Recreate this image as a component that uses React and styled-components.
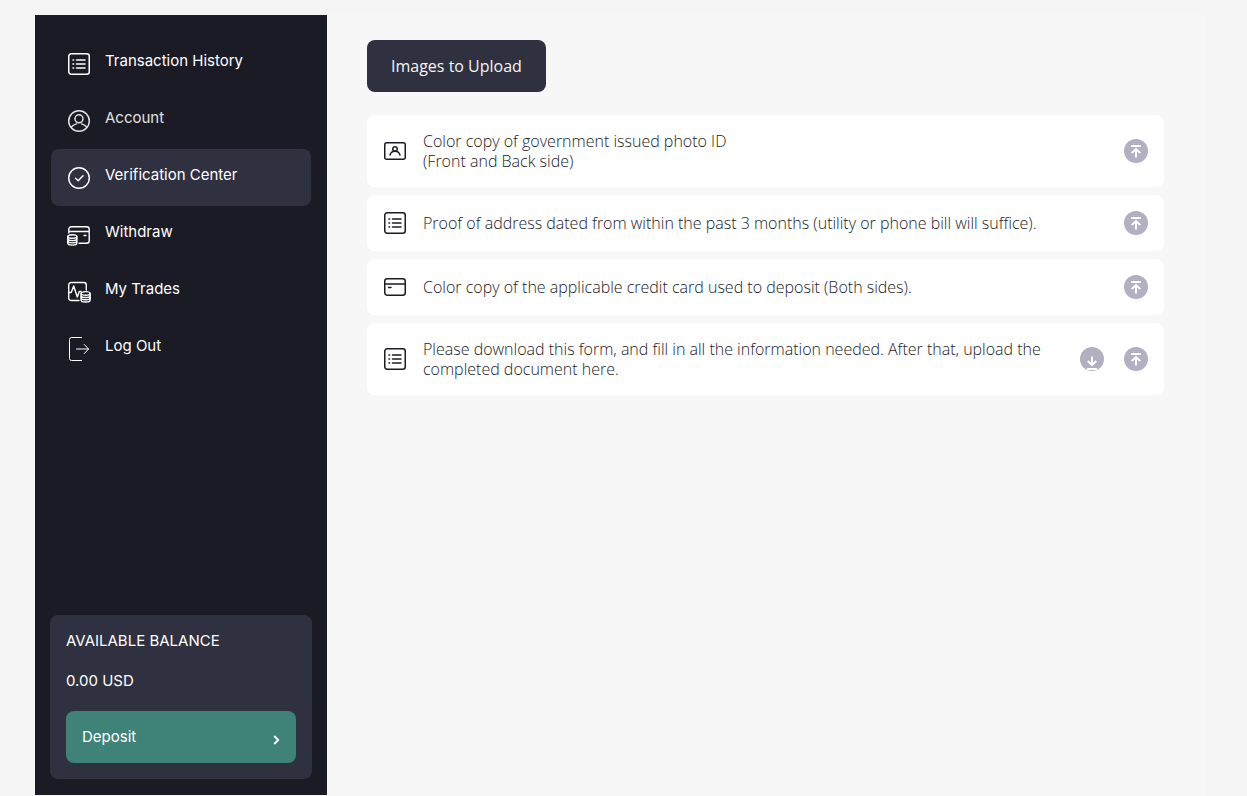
import React from "react";
import styled, { createGlobalStyle } from "styled-components";

const GlobalStyle = createGlobalStyle`
  *, *::before, *::after { box-sizing: border-box; }
  body {
    margin: 0;
    background: #f5f5f5;
    font-family: "Open Sans", sans-serif;
    font-size: 16px;
    line-height: 20px;
    color: #1b1b25;
  }
  button { font: inherit; border: 0; cursor: pointer; }
`;

const Page = styled.div`
  display: flex;
  min-height: 100vh;
  padding: 15px 42px 0 35px;
`;

const Sidebar = styled.aside`
  display: flex;
  flex-direction: column;
  justify-content: space-between;
  flex: 0 0 292px;
  margin-bottom: 1px;
  padding: 20px 15px 16px;
  background: #1b1b25;
  color: #fff;
  font-family: Inter, "Open Sans", sans-serif;
  font-size: 15px;
`;

const Nav = styled.nav`
  display: flex;
  flex-direction: column;
  padding: 0 1px;
`;

const NavLink = styled.a`
  display: flex;
  align-items: flex-start;
  gap: 14px;
  height: 57px;
  padding: 17px 16px;
  border-radius: 8px;
  background: ${(p) => (p.$active ? "#2f3040" : "transparent")};
  color: ${(p) => (p.$dim ? "#e0e0e0" : "#fff")};
  line-height: 18px;
  text-decoration: none;
`;

const Icon = styled.svg`
  flex: none;
  width: 24px;
  height: 24px;
  fill: none;
  stroke: currentColor;
  stroke-width: ${(p) => p.$weight || 1.5};
  stroke-linecap: round;
  stroke-linejoin: round;
`;

const BalanceCard = styled.section`
  display: flex;
  flex-direction: column;
  gap: 20px;
  padding: 16px;
  border-radius: 8px;
  background: #2f3040;
`;

const BalanceText = styled.p`
  margin: 0;
`;

const DepositButton = styled.button`
  display: flex;
  align-items: center;
  justify-content: space-between;
  height: 52px;
  padding: 0 16px;
  border-radius: 8px;
  background: #3f8278;
  color: #fff;
`;

const Chevron = styled.svg`
  width: 7px;
  height: 10px;
  margin-top: 6px;
  fill: none;
  stroke: currentColor;
  stroke-width: 1.8;
`;

const Main = styled.main`
  flex: 1;
  min-width: 0;
  padding: 25px 41px 24px 40px;
  background: #f7f7f7;
`;

const TabButton = styled.button`
  height: 52px;
  padding: 0 24px;
  border-radius: 8px;
  background: #2f3040;
  color: #f4f4f4;
`;

const DocumentList = styled.ul`
  display: flex;
  flex-direction: column;
  gap: 8px;
  margin: 23px 0 0;
  padding: 0;
  list-style: none;
`;

const DocumentRow = styled.li`
  display: flex;
  align-items: center;
  gap: 16px;
  padding: 16px;
  border-radius: 8px;
  background: #fff;
`;

const DocumentText = styled.p`
  flex: 1;
  margin: 0;
  font-weight: 300;
  white-space: pre-line;
`;

const Actions = styled.div`
  display: flex;
  gap: 20px;
`;

const RoundButton = styled.button`
  width: 24px;
  height: 24px;
  padding: 0;
  border-radius: 50%;
  overflow: hidden;
  background: #b1afc1;
  color: #fff;
`;

const Glyph = styled.svg`
  display: block;
  width: 24px;
  height: 24px;
  fill: none;
  stroke: currentColor;
  stroke-width: 2;
`;

const ListIcon = () => (
  <Icon viewBox="0 0 24 24" aria-hidden="true">
    <rect x="1.75" y="1.75" width="20.5" height="20.5" rx="2.5" />
    <path d="M9.5 8h8.5M9.5 12h8.5M9.5 16h8.5" />
    <path d="M6 8h.6M6 12h.6M6 16h.6" />
  </Icon>
);

const AccountIcon = () => (
  <Icon viewBox="0 0 24 24" aria-hidden="true">
    <circle cx="12" cy="12" r="10.3" />
    <circle cx="12" cy="9.8" r="4" />
    <path d="M4.2 18.2c1.2-1.7 3-2.7 5.2-3.3M19.8 18.2c-1.2-1.7-3-2.7-5.2-3.3" />
  </Icon>
);

const CheckIcon = () => (
  <Icon viewBox="0 0 24 24" $weight={1.4} aria-hidden="true">
    <circle cx="12" cy="12" r="10.3" />
    <path d="M8.5 12.3l2.7 2.5 4.8-5" />
  </Icon>
);

const Coins = ({ x, y }) => (
  <g transform={`translate(${x} ${y})`}>
    <ellipse cx="4.7" cy="2" rx="4.5" ry="1.8" />
    <path d="M.2 2v6.8c0 1 2 1.8 4.5 1.8s4.5-.8 4.5-1.8V2" />
    <path d="M.2 4.3c0 1 2 1.8 4.5 1.8s4.5-.8 4.5-1.8M.2 6.600c0 1 2 1.800 4.500 1.800s4.500-.8 4.500-1.800" />
  </g>
);

const WithdrawIcon = () => (
  <Icon viewBox="0 0 24 24" $weight={1.4} aria-hidden="true">
    <path d="M1.8 10V6.2a2.5 2.5 0 0 1 2.5-2.5h15.4a2.5 2.5 0 0 1 2.5 2.5v11.6a2.5 2.5 0 0 1-2.5 2.5H12M1.8 8.5h20.4M17 12.5h2" />
    <Coins x={0.6} y={11.5} />
  </Icon>
);

const TradesIcon = () => (
  <Icon viewBox="0 0 24 24" $weight={1.4} aria-hidden="true">
    <path d="M12 20.5H4.2a2.5 2.5 0 0 1-2.5-2.5V5a2.5 2.5 0 0 1 2.5-2.5h12.6A2.5 2.5 0 0 1 19.3 5v5" />
    <path d="M1.8 12.5h2.4L6.7 6l3.6 11 2-5.5h1.8" />
    <Coins x={13.9} y={11.4} />
  </Icon>
);

const LogOutIcon = () => (
  <Icon viewBox="0 0 24 24" $weight={1} aria-hidden="true">
    <path d="M14.5 .5H4.5a2 2 0 0 0-2 2v19a2 2 0 0 0 2 2h10" />
    <path d="M9.5 12h12M17.3 7.5l4.2 4.5-4.2 4.5" />
  </Icon>
);

const IdIcon = () => (
  <Icon viewBox="0 0 24 24" aria-hidden="true">
    <rect x="1.75" y="3.75" width="20.5" height="16.5" rx="2" />
    <circle cx="12" cy="10" r="2.2" />
    <path d="M7 16c.7-2.4 2.6-3.800 5-3.800s4.300 1.400 5 3.800" />
  </Icon>
);

const CardIcon = () => (
  <Icon viewBox="0 0 24 24" aria-hidden="true">
    <rect x="1.75" y="3.75" width="20.5" height="16.5" rx="2.5" />
    <path d="M2 9h20M5.5 12.5h2.5" />
  </Icon>
);

const UploadButton = () => (
  <RoundButton type="button" aria-label="Upload">
    <Glyph viewBox="0 0 24 24" aria-hidden="true">
      <path d="M7 7h10M12 18.5v-8M7.7 14l4.3-4 4.3 4" />
    </Glyph>
  </RoundButton>
);

const DownloadButton = () => (
  <RoundButton type="button" aria-label="Download">
    <Glyph viewBox="0 0 24 24" aria-hidden="true">
      <path d="M12 9.5v8M7.7 14l4.3 4 4.3-4M7 22h10" />
    </Glyph>
  </RoundButton>
);

const links = [
  { label: "Transaction History", icon: ListIcon },
  { label: "Account", icon: AccountIcon, dim: true },
  { label: "Verification Center", icon: CheckIcon, active: true },
  { label: "Withdraw", icon: WithdrawIcon },
  { label: "My Trades", icon: TradesIcon },
  { label: "Log Out", icon: LogOutIcon },
];

const documents = [
  {
    text: "Color copy of government issued photo ID\n(Front and Back side)",
    icon: IdIcon,
  },
  {
    text: "Proof of address dated from within the past 3 months (utility or phone bill will suffice).",
    icon: ListIcon,
  },
  {
    text: "Color copy of the applicable credit card used to deposit (Both sides).",
    icon: CardIcon,
  },
  {
    text: "Please download this form, and fill in all the information needed. After that, upload the completed document here.",
    icon: ListIcon,
    download: true,
  },
];

export default function App() {
  return (
    <>
      <GlobalStyle />
      <Page>
        <Sidebar>
          <Nav>
            {links.map(({ label, icon: LinkIcon, active, dim }) => (
              <NavLink
                key={label}
                href="#"
                $active={active}
                $dim={dim}
                aria-current={active ? "page" : undefined}
              >
                <LinkIcon />
                <span>{label}</span>
              </NavLink>
            ))}
          </Nav>
          <BalanceCard>
            <BalanceText>AVAILABLE BALANCE</BalanceText>
            <BalanceText>0.00 USD</BalanceText>
            <DepositButton type="button">
              Deposit
              <Chevron viewBox="0 0 7 10" aria-hidden="true">
                <path d="M1.2 1l4 4-4 4" />
              </Chevron>
            </DepositButton>
          </BalanceCard>
        </Sidebar>
        <Main>
          <TabButton type="button">Images to Upload</TabButton>
          <DocumentList>
            {documents.map(({ text, icon: RowIcon, download }) => (
              <DocumentRow key={text}>
                <RowIcon />
                <DocumentText>{text}</DocumentText>
                <Actions>
                  {download && <DownloadButton />}
                  <UploadButton />
                </Actions>
              </DocumentRow>
            ))}
          </DocumentList>
        </Main>
      </Page>
    </>
  );
}
